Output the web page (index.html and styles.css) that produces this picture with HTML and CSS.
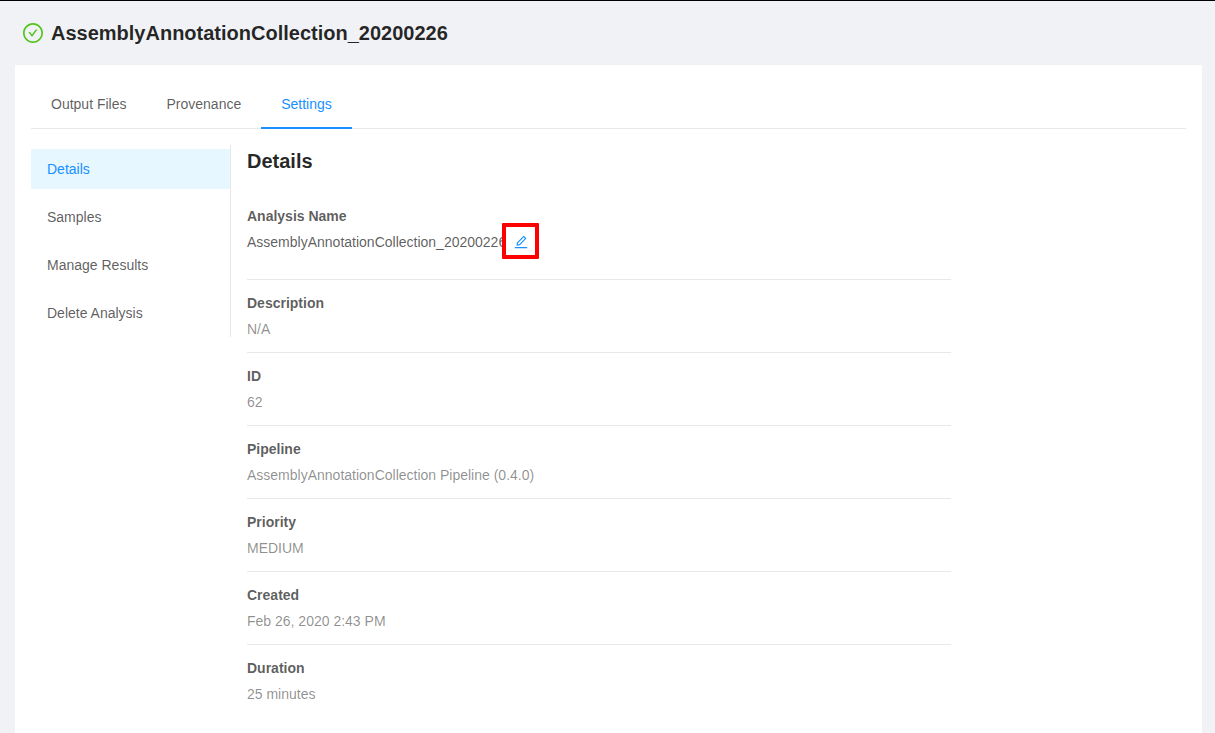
FILE: index.html
```html
<!DOCTYPE html>
<html lang="en">
<head>
<meta charset="utf-8">
<title>AssemblyAnnotationCollection_20200226</title>
<link rel="stylesheet" href="styles.css">
</head>
<body>
<header class="page-header">
  <svg class="status" viewBox="64 64 896 896" fill="currentColor"><path d="M699 353h-46.900c-10.200 0-19.900 4.900-25.900 13.300L469 584.300l-71.200-98.800c-6-8.300-15.600-13.300-25.900-13.300H325c-6.500 0-10.300 7.400-6.500 12.700l124.600 172.800a31.800 31.800 0 0 0 51.700 0l210.600-292c3.900-5.300.1-12.700-6.400-12.700z"/><path d="M512 64C264.600 64 64 264.600 64 512s200.600 448 448 448 448-200.600 448-448S759.400 64 512 64zm0 820c-205.400 0-372-166.600-372-372s166.600-372 372-372 372 166.600 372 372-166.600 372-372 372z"/></svg>
  <h1>AssemblyAnnotationCollection_20200226</h1>
</header>
<main class="card">
  <nav class="tabs">
    <a class="tab">Output Files</a>
    <a class="tab">Provenance</a>
    <a class="tab active">Settings</a>
  </nav>
  <div class="layout">
    <nav class="menu">
      <a class="item selected">Details</a>
      <a class="item">Samples</a>
      <a class="item">Manage Results</a>
      <a class="item">Delete Analysis</a>
    </nav>
    <section class="content">
      <h2>Details</h2>
      <dl class="list">
        <div class="row first"><dt>Analysis Name</dt><dd class="name">AssemblyAnnotationCollection_20200226<span class="edit"><svg viewBox="64 64 896 896" fill="currentColor"><path d="M257.700 752c2 0 4-.2 6-.5L431.900 722c2-.4 3.900-1.300 5.300-2.800l423.900-423.900a9.960 9.960 0 0 0 0-14.100L694.900 114.900c-1.900-1.900-4.400-2.900-7.100-2.900s-5.200 1-7.100 2.900L256.800 538.800c-1.500 1.500-2.400 3.300-2.800 5.300l-29.500 168.200a33.500 33.500 0 0 0 9.400 29.800c6.600 6.400 14.900 9.900 23.800 9.900zm67.400-174.400L687.800 215l73.300 73.300-362.700 362.600-88.900 15.700 15.600-89zM880 836H144c-17.700 0-32 14.300-32 32v36c0 4.400 3.600 8 8 8h784c4.400 0 8-3.600 8-8v-36c0-17.700-14.300-32-32-32z"/></svg></span></dd></div>
        <div class="row"><dt>Description</dt><dd>N/A</dd></div>
        <div class="row"><dt>ID</dt><dd>62</dd></div>
        <div class="row"><dt>Pipeline</dt><dd>AssemblyAnnotationCollection Pipeline (0.4.0)</dd></div>
        <div class="row"><dt>Priority</dt><dd>MEDIUM</dd></div>
        <div class="row"><dt>Created</dt><dd>Feb 26, 2020 2:43 PM</dd></div>
        <div class="row"><dt>Duration</dt><dd>25 minutes</dd></div>
      </dl>
    </section>
  </div>
</main>
</body>
</html>
```

FILE: styles.css
```css
* { box-sizing: border-box; }
body {
  margin: 0;
  height: 733px;
  overflow: hidden;
  background: #f0f2f5;
  border-top: 1px solid #000;
  font: 14px/22px "Liberation Sans", Arial, sans-serif;
  color: rgba(0, 0, 0, .65);
}
.page-header {
  display: flex;
  align-items: center;
  gap: 8px;
  height: 64px;
  padding-left: 23px;
}
.status { width: 20px; height: 20px; color: #52c41a; }
h1, h2 { margin: 0; font-size: 20px; font-weight: 700; color: rgba(0, 0, 0, .85); }
h1 { line-height: 28px; }
.card {
  height: 668px;
  margin: 0 13px 0 15px;
  padding: 16px;
  background: #fff;
}
.tabs { display: flex; height: 48px; border-bottom: 1px solid #e8e8e8; }
.tab { height: 48px; padding: 12px 20px; }
.tab.active { color: #1890ff; border-bottom: 2px solid #1890ff; }
.layout { display: flex; align-items: flex-start; margin-top: 16px; }
.menu {
  width: 200px;
  height: 192px;
  padding-top: 4px;
  border-right: 1px solid #e8e8e8;
}
.item { display: block; height: 40px; margin-bottom: 8px; padding-left: 16px; line-height: 40px; }
.item.selected { background: #e6f7ff; color: #1890ff; }
.content { width: 704px; margin-left: 16px; }
h2 { line-height: 32px; }
.list { margin: 16px 0 0; }
.row { height: 73px; padding-top: 12px; border-bottom: 1px solid #e8e8e8; }
.row.first { height: 87px; }
.row:last-child { border-bottom: 0; }
dt { font-weight: 700; }
dd { margin: 4px 0 0; color: rgba(0, 0, 0, .45); }
dd.name { color: rgba(0, 0, 0, .65); }
.name { position: relative; }
.edit {
  position: absolute;
  left: 255px;
  top: -8px;
  width: 37px;
  height: 36px;
  padding: 8px 0 0 8px;
  border: 4px solid #f00;
  border-radius: 1px;
  color: #1890ff;
}
.edit svg { display: block; width: 14px; height: 14px; }
```
